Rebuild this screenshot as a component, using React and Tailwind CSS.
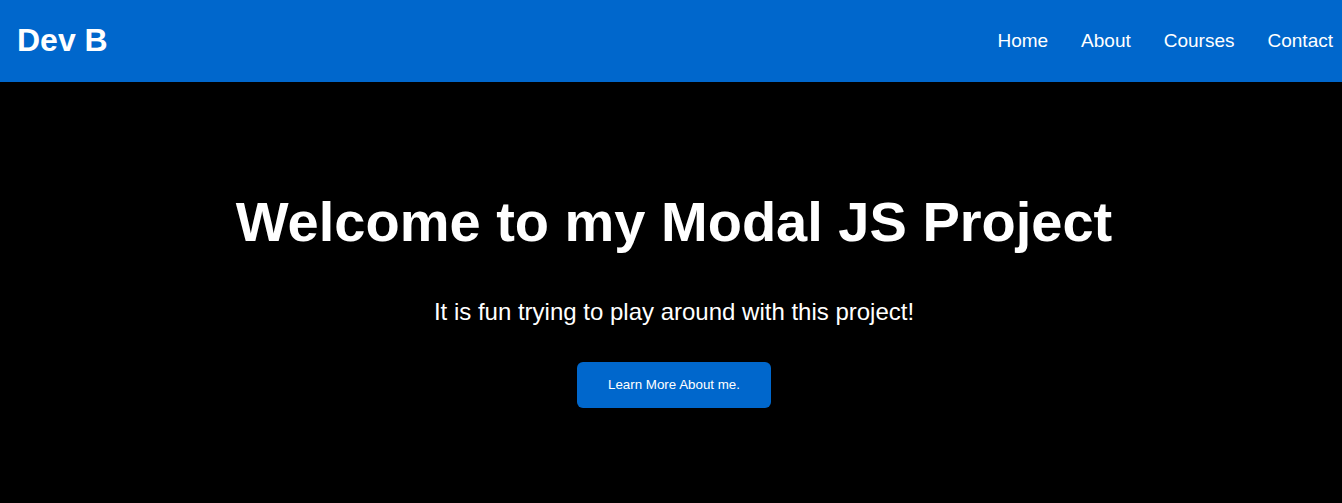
export default function App() {
  return (
    <div className="min-h-[503px] bg-black" style={{ fontFamily: '"Liberation Sans", Arial, sans-serif' }}>
      <header className="h-[82px] bg-[#0067cc] flex items-center justify-between pl-[17px] pr-[9px] pb-[2px]">
        <div className="text-white font-bold text-[32px] leading-none">Dev B</div>
        <nav className="flex items-center gap-[33px] text-white text-[19px] leading-none">
          <a href="#">Home</a>
          <a href="#">About</a>
          <a href="#">Courses</a>
          <a href="#">Contact</a>
        </nav>
      </header>
      <main className="flex flex-col items-center text-white pt-[112px] pl-[6px]">
        <h1 className="font-bold text-[56px] leading-none">Welcome to my Modal JS Project</h1>
        <p className="mt-[50px] text-[24px] leading-none">It is fun trying to play around with this project!</p>
        <button className="mt-[38px] w-[194px] h-[46px] rounded-[6px] bg-[#0067cc] text-white text-[13.333px] font-normal">
          Learn More About me.
        </button>
      </main>
    </div>
  );
}
